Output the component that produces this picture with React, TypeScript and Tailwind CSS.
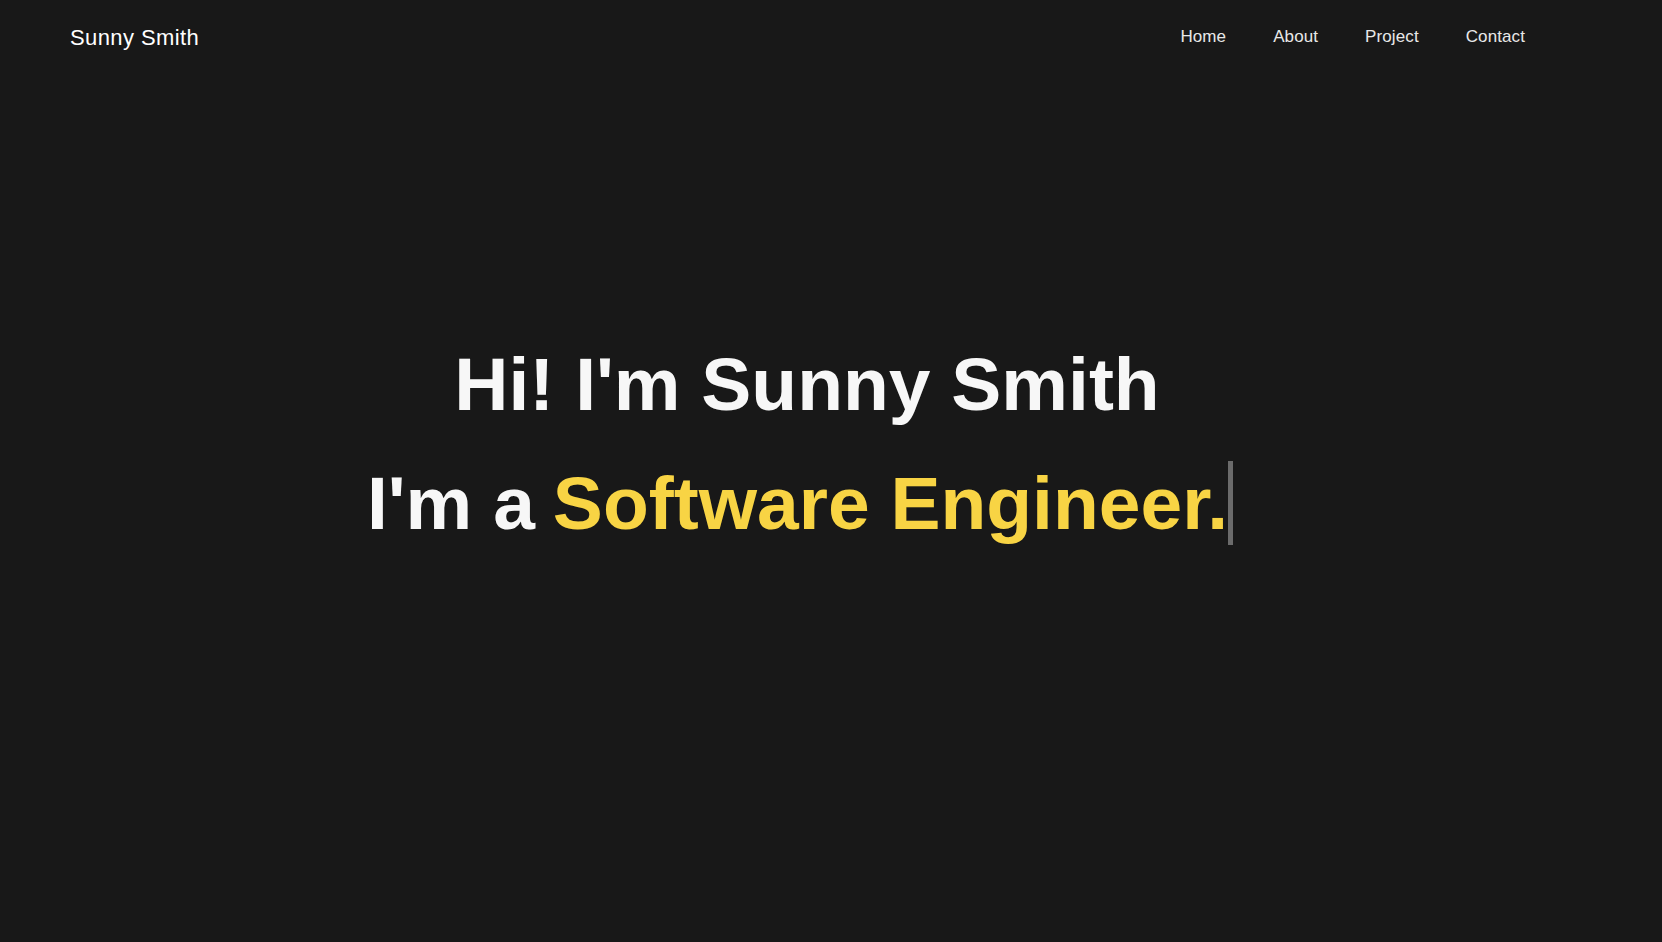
export default function App() {
    const links = ["Home", "About", "Project", "Contact"];

    return (
        <div className="min-h-screen w-full bg-[#181818] font-['Liberation_Sans',Arial,sans-serif] text-[#f5f5f5]">
            {/* Header */}
            <header className="flex h-[72px] items-center justify-between pl-[70px] pr-[137px]">
                <div className="pt-[3px] text-[22px] leading-none tracking-[0.4px] text-white">
                    Sunny Smith
                </div>
                <nav className="flex gap-[47px]">
                    {links.map((link) => (
                        <a
                            key={link}
                            href="#"
                            className="text-[17px] leading-none tracking-[0.1px] text-[#e8e8e8]"
                        >
                            {link}
                        </a>
                    ))}
                </nav>
            </header>

            {/* Hero */}
            <section className="pr-[48px] pt-[267px] text-center font-bold text-[75px]">
                <h1 className="leading-[90px] text-[#f7f7f7]">Hi! I'm Sunny Smith</h1>
                <h2 className="mt-[29px] pr-[14px] leading-[90px] text-[#f7f7f7]">
                    I'm a
                    <span className="ml-[18px] border-r-[5px] border-[#6b6b6b] text-[#f8d444]">
                        Software Engineer.
                    </span>
                </h2>
            </section>
        </div>
    );
}
